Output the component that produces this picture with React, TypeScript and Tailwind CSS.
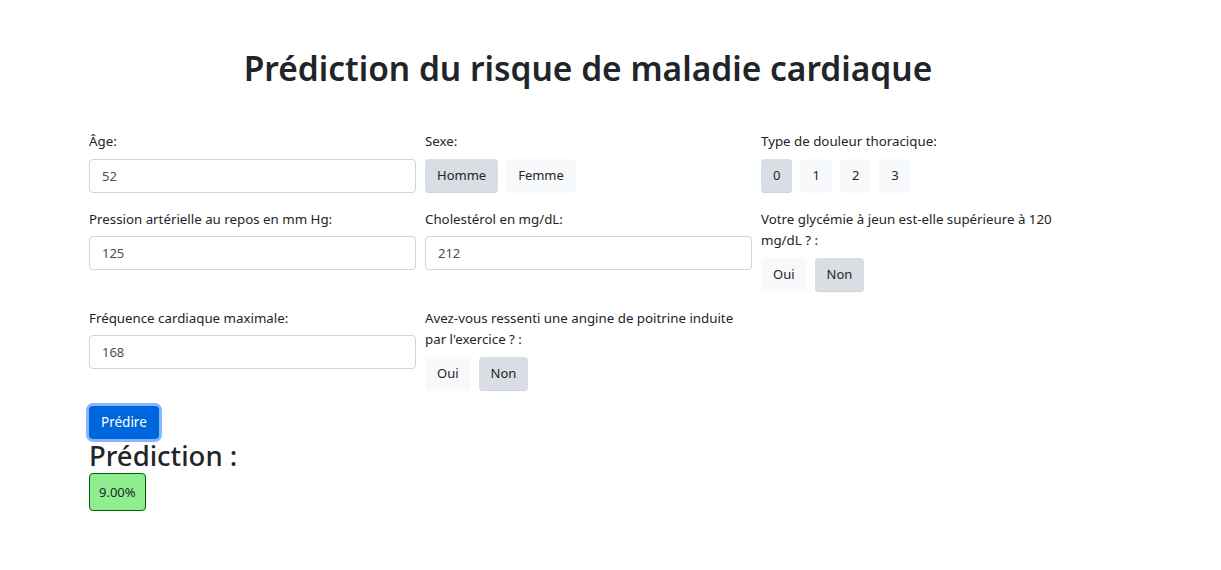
import { useState } from "react";

type Opt = { label: string; value: string };

function Field({ label, children }: { label: string; children: React.ReactNode }) {
  return (
    <div className="mb-4 pr-[9px]">
      <label className="block mb-[6px] leading-[21.5px] text-[13.3px]">{label}</label>
      {children}
    </div>
  );
}

function TextInput({ value }: { value: string }) {
  const [v, setV] = useState(value);
  return (
    <input
      value={v}
      onChange={(e) => setV(e.target.value)}
      className="block w-full h-[34px] px-3 text-[13px] text-[#495057] bg-white border border-[#ced4da] rounded-[4px] outline-none"
    />
  );
}

function Toggle({ options, initial }: { options: Opt[]; initial: string }) {
  const [sel, setSel] = useState(initial);
  return (
    <div className="flex gap-[8px]">
      {options.map((o) => (
        <button
          key={o.value}
          onClick={() => setSel(o.value)}
          className={
            sel === o.value
              ? "h-[34px] px-3 text-[13px] rounded-[4px] bg-[#d9dde4] text-[#212529] shadow-[inset_0_-1px_0_rgba(0,0,0,0.05)]"
              : "h-[34px] px-3 text-[13px] rounded-[4px] bg-[#f8f9fa] text-[#212529]"
          }
        >
          {o.label}
        </button>
      ))}
    </div>
  );
}

const yesNo: Opt[] = [
  { label: "Oui", value: "1" },
  { label: "Non", value: "0" },
];

export default function App() {
  return (
    <div className="min-h-screen bg-white text-[#212529] font-['Noto_Sans','Open_Sans',sans-serif]">
      <div className="pl-[89px] w-[1087px] pt-[44px]">
        <h1 className="text-center text-[33.5px] font-semibold leading-[48px] mb-[39px]">
          Prédiction du risque de maladie cardiaque
        </h1>

        <div className="grid grid-cols-[336px_336px_336px] items-start">
          <Field label="Âge:">
            <TextInput value="52" />
          </Field>
          <Field label="Sexe:">
            <Toggle
              options={[
                { label: "Homme", value: "1" },
                { label: "Femme", value: "0" },
              ]}
              initial="1"
            />
          </Field>
          <Field label="Type de douleur thoracique:">
            <Toggle
              options={[
                { label: "0", value: "0" },
                { label: "1", value: "1" },
                { label: "2", value: "2" },
                { label: "3", value: "3" },
              ]}
              initial="0"
            />
          </Field>

          <Field label="Pression artérielle au repos en mm Hg:">
            <TextInput value="125" />
          </Field>
          <Field label="Cholestérol en mg/dL:">
            <TextInput value="212" />
          </Field>
          <Field label="Votre glycémie à jeun est-elle supérieure à 120 mg/dL ? :">
            <Toggle options={yesNo} initial="0" />
          </Field>

          <Field label="Fréquence cardiaque maximale:">
            <TextInput value="168" />
          </Field>
          <Field label="Avez-vous ressenti une angine de poitrine induite par l'exercice ? :">
            <Toggle options={yesNo} initial="0" />
          </Field>
        </div>

        <button className="h-[33px] px-3 text-[13.5px] text-white bg-[#0066dd] rounded-[4px] ring-3 ring-[#86b7fe] mt-[-1px]">
          Prédire
        </button>

        <h2 className="text-[27.5px] font-medium leading-[34px]">Prédiction :</h2>
        <div className="inline-block h-[38px] px-[9px] leading-[36px] text-[13px] bg-[#90ee90] border border-[#006400] rounded-[4px]">
          9.00%
        </div>
      </div>
    </div>
  );
}
